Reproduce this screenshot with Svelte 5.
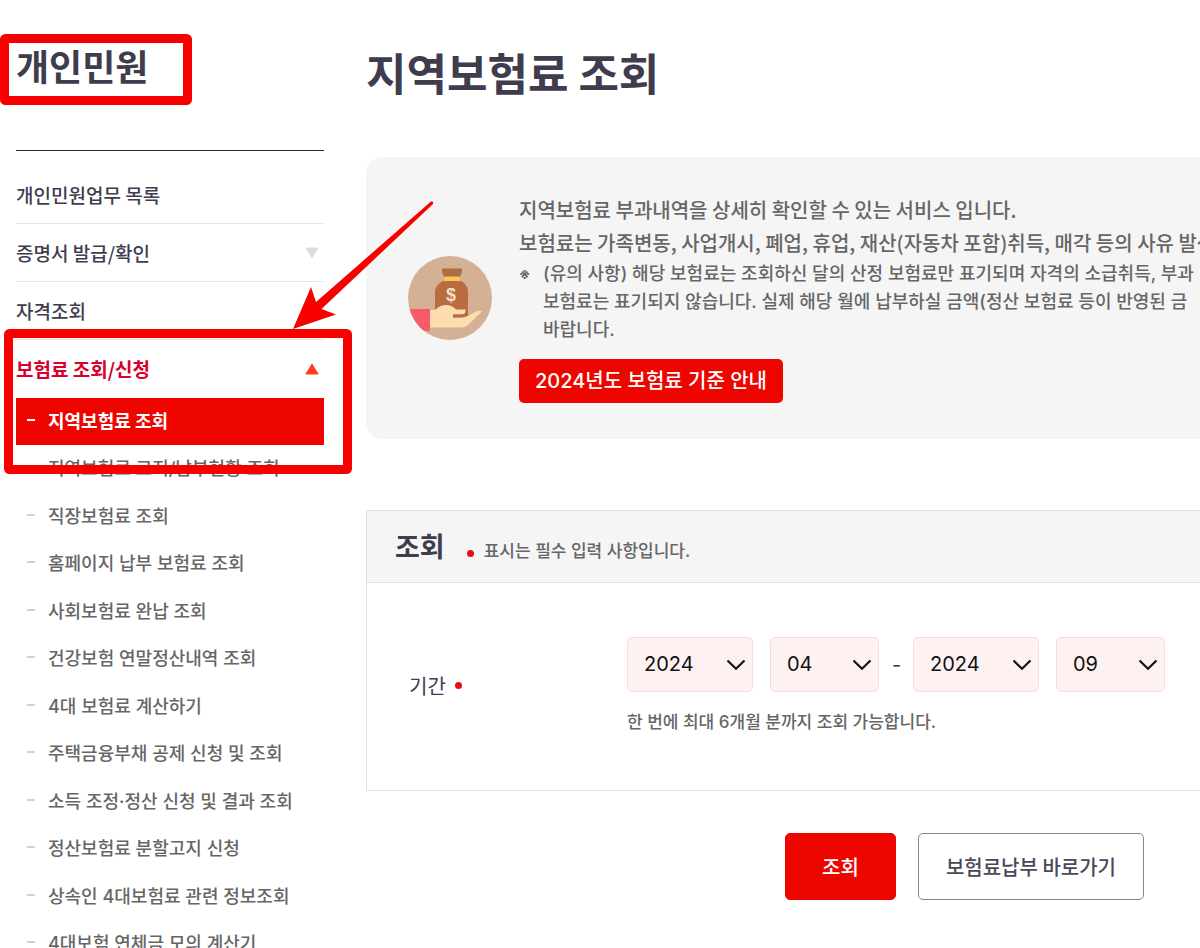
<script>
  const menu = [
    { title: '개인민원업무 목록' },
    { title: '증명서 발급/확인', arrow: true },
    { title: '자격조회', arrow: true },
    { title: '보험료 조회/신청', arrow: true, open: true }
  ]

  const submenu = [
    '지역보험료 조회',
    '지역보험료 고지/납부현황 조회',
    '직장보험료 조회',
    '홈페이지 납부 보험료 조회',
    '사회보험료 완납 조회',
    '건강보험 연말정산내역 조회',
    '4대 보험료 계산하기',
    '주택금융부채 공제 신청 및 조회',
    '소득 조정·정산 신청 및 결과 조회',
    '정산보험료 분할고지 신청',
    '상속인 4대보험료 관련 정보조회',
    '4대보험 연체금 모의 계산기'
  ]

  const years = ['2022', '2023', '2024']
  const months = ['01', '02', '03', '04', '05', '06', '07', '08', '09', '10', '11', '12']

  let current = $state(0)
  let fromYear = $state('2024')
  let fromMonth = $state('04')
  let toYear = $state('2024')
  let toMonth = $state('09')
</script>

{#snippet chevron()}
  <svg class="chevron" viewBox="0 0 20 12" aria-hidden="true">
    <path d="M1.5 1.5 L10 9.8 L18.5 1.5" fill="none" stroke="#111" stroke-width="2.2" />
  </svg>
{/snippet}

<div class="page">
  <aside>
    <h2>개인민원</h2>
    <nav>
      <ul class="menu">
        {#each menu as item}
          <li>
            <a href="#menu" class:open={item.open}>
              {item.title}
              {#if item.arrow}
                <svg viewBox="0 0 14 12" aria-hidden="true">
                  {#if item.open}
                    <path d="M7 1 L13 11 H1 Z" fill="#ff3d1f" stroke="#ff3d1f" stroke-linejoin="round" />
                  {:else}
                    <path d="M1 1 H13 L7 11 Z" fill="#dcdcdc" stroke="#dcdcdc" stroke-linejoin="round" />
                  {/if}
                </svg>
              {/if}
            </a>
          </li>
        {/each}
      </ul>
      <ul class="submenu">
        {#each submenu as title, i}
          <li>
            <a href="#submenu" class:active={i === current} onclick={() => (current = i)}>{title}</a>
          </li>
        {/each}
      </ul>
    </nav>
  </aside>

  <main>
    <h1>지역보험료 조회</h1>

    <section class="info">
      <svg class="money" viewBox="0 0 84 84" aria-hidden="true">
        <defs>
          <clipPath id="circle"><circle cx="42" cy="42" r="42" /></clipPath>
        </defs>
        <g clip-path="url(#circle)">
          <rect width="84" height="84" fill="#d4b095" />
          <path d="M34 12.5 H54 V16 L51.5 21.5 H36.5 L34 16 Z" fill="#ae6c41" />
          <rect x="36" y="20.5" width="16" height="5" rx="2" fill="#ffc75a" />
          <path d="M35 25 H53 C57 27 60 31 60 36 V60 H27 V36 C27 31 31 27 35 25 Z" fill="#b96c3d" />
          <text x="43" y="45" text-anchor="middle">$</text>
          <path
            d="M22 54 H27 C31 50 35 49 38 49 C42 49 46 51 48 53.5 H58 V56 Q57 58.5 53 58.5 H45 V61.5 H55 Q59 61.5 61 59.5 L68 55.5 Q71 54 74 55.5 L60 69 Q57 71.5 53 71.5 H22 Z"
            fill="#fddcae"
          />
          <path d="M45 58.5 H54 Q57.5 58.5 57.5 54 H60 Q60 61.5 54 61.5 H45 Z" fill="#b96c3d" />
          <rect y="53" width="22" height="22" fill="#f75a68" />
        </g>
      </svg>
      <div class="info_text">
        <p>지역보험료 부과내역을 상세히 확인할 수 있는 서비스 입니다.</p>
        <p>보험료는 가족변동, 사업개시, 폐업, 휴업, 재산(자동차 포함)취득, 매각 등의 사유 발생</p>
        <div class="note">
          <span class="mark">※</span>
          <span>
            (유의 사항) 해당 보험료는 조회하신 달의 산정 보험료만 표기되며 자격의 소급취득, 부과<br />
            보험료는 표기되지 않습니다. 실제 해당 월에 납부하실 금액(정산 보험료 등이 반영된 금<br />
            바랍니다.
          </span>
        </div>
        <a class="guide" href="#guide">2024년도 보험료 기준 안내</a>
      </div>
    </section>

    <form>
      <div class="search">
        <div class="search_head">
          <h3>조회</h3>
          <i class="dot"></i>
          <span>표시는 필수 입력 사항입니다.</span>
        </div>
        <div class="search_body">
          <label for="from_year">기간 <i class="dot"></i></label>
          <div>
            <div class="period">
              <span class="select year">
                <select id="from_year" bind:value={fromYear}>
                  {#each years as year}<option>{year}</option>{/each}
                </select>
                {@render chevron()}
              </span>
              <span class="select">
                <select aria-label="시작 월" bind:value={fromMonth}>
                  {#each months as month}<option>{month}</option>{/each}
                </select>
                {@render chevron()}
              </span>
              <span class="dash">-</span>
              <span class="select year">
                <select aria-label="종료 연도" bind:value={toYear}>
                  {#each years as year}<option>{year}</option>{/each}
                </select>
                {@render chevron()}
              </span>
              <span class="select">
                <select aria-label="종료 월" bind:value={toMonth}>
                  {#each months as month}<option>{month}</option>{/each}
                </select>
                {@render chevron()}
              </span>
            </div>
            <p class="hint">한 번에 최대 6개월 분까지 조회 가능합니다.</p>
          </div>
        </div>
      </div>
      <div class="buttons">
        <button type="button" class="primary">조회</button>
        <button type="button">보험료납부 바로가기</button>
      </div>
    </form>
  </main>

  <!-- guide marks: two frames and the arrow -->
  <svg class="marks" width="440" height="480" aria-hidden="true">
    <g fill="none" stroke="#f80000" stroke-width="9" stroke-linejoin="round">
      <rect x="4.5" y="38.5" width="183" height="62" rx="1" />
      <rect x="8.5" y="333.5" width="339" height="136" rx="1" />
    </g>
    <path d="M293 329 L311 287 L316 302 L431 201.5 Q434 201 433 204 L321.5 309 L336 314.5 Z" fill="#f80000" />
  </svg>
</div>

<style>
  :global(body) {
    margin: 0;
    background: #fff;
  }

  .page {
    position: relative;
    display: flex;
    gap: 42px;
    padding-left: 16px;
    overflow: hidden;
    font-family: 'Noto Sans CJK KR', sans-serif;
    color: #3f3d4d;
  }

  h1, h2, h3, p, ul {
    margin: 0;
    padding: 0;
  }
  ul {
    list-style: none;
  }
  a {
    text-decoration: none;
  }

  aside {
    flex: 0 0 308px;
    padding-top: 38px;
  }
  h2 {
    font-size: 36px;
    line-height: 54px;
    padding-bottom: 58px;
    border-bottom: 1px solid #2b2b33;
  }

  .menu {
    padding-top: 15px;
  }
  .menu a {
    display: flex;
    align-items: center;
    justify-content: space-between;
    height: 57px;
    padding-right: 5px;
    border-bottom: 1px solid #e6e6e6;
    font-size: 19px;
    font-weight: 500;
    color: #3f3d4d;
  }
  .menu a.open {
    border-color: transparent;
    font-weight: 700;
    color: #d8002c;
  }
  .menu svg {
    width: 14px;
    height: 12px;
  }

  .submenu a {
    display: flex;
    align-items: center;
    box-sizing: border-box;
    height: 47px;
    padding-bottom: 3px;
    font-family: Inter, 'Noto Sans CJK KR', sans-serif;
    font-size: 18px;
    font-weight: 500;
    color: #666;
  }
  .submenu li:nth-child(even) {
    padding-bottom: 1px;
  }
  .submenu a::before {
    content: '';
    width: 8px;
    height: 2px;
    margin: 0 13px 0 11px;
    background: #d2d2d2;
  }
  .submenu a.active {
    background: #ee0500;
    color: #fff;
    font-weight: 700;
  }
  .submenu a.active::before {
    background: #fff;
  }

  main {
    flex: 1;
    min-width: 0;
    padding-top: 39px;
  }
  h1 {
    font-size: 44px;
    line-height: 66px;
  }

  .info {
    display: flex;
    align-items: center;
    margin-top: 52px;
    padding: 36px 0 36px 42px;
    gap: 27px;
    border-radius: 16px 0 0 16px;
    background: #f5f5f5;
    color: #666;
    font-weight: 500;
    overflow: hidden;
    white-space: nowrap;
  }
  .money {
    flex: 0 0 84px;
    height: 84px;
  }
  .money text {
    font-family: 'Liberation Sans', sans-serif;
    font-size: 18px;
    font-weight: 700;
    fill: #f6dcc8;
  }
  .info_text p {
    font-size: 20px;
    line-height: 33px;
  }
  .note {
    display: flex;
    padding-top: 1px;
    font-family: Inter, 'Noto Sans CJK KR', sans-serif;
    font-size: 18px;
    line-height: 28px;
  }
  .note .mark {
    flex: 0 0 24px;
    font-size: 14px;
    font-weight: 700;
  }
  .guide {
    display: inline-block;
    margin-top: 15px;
    padding: 0 16px;
    border-radius: 5px;
    background: #ee0500;
    color: #fff;
    font-family: Inter, 'Noto Sans CJK KR', sans-serif;
    font-size: 20px;
    font-weight: 500;
    line-height: 44px;
  }

  .search {
    margin-top: 71px;
    border: 1px solid #e2e2e2;
    border-right: 0;
  }
  .search_head {
    display: flex;
    align-items: baseline;
    padding-left: 28px;
    border-bottom: 1px solid #e2e2e2;
    background: #f5f5f5;
    color: #666;
    font-family: Inter, 'Noto Sans CJK KR', sans-serif;
    font-size: 17px;
    font-weight: 500;
  }
  h3 {
    margin-right: 22px;
    padding-bottom: 1px;
    color: #3f3d4d;
    font-family: 'Noto Sans CJK KR', sans-serif;
    font-size: 27px;
    line-height: 70px;
  }
  .dot {
    display: inline-block;
    width: 7px;
    height: 7px;
    border-radius: 50%;
    background: #e60f0f;
  }
  .search_head .dot {
    margin-right: 10px;
  }

  .search_body {
    display: flex;
    align-items: center;
    padding: 54px 0 54px 42px;
  }
  label {
    display: flex;
    align-items: center;
    gap: 9px;
    flex: 0 0 218px;
    padding-bottom: 2px;
    font-size: 20px;
  }
  .period {
    display: flex;
    align-items: center;
    gap: 17px;
  }
  .select {
    position: relative;
    width: 109px;
  }
  .select.year {
    width: 126px;
  }
  select {
    display: block;
    width: 100%;
    height: 55px;
    padding: 0 16px 2px;
    appearance: none;
    border: 1px solid #fadadd;
    border-radius: 5px;
    background: #fef1f1;
    color: #111;
    font-family: Inter, sans-serif;
    font-size: 20px;
  }
  .chevron {
    position: absolute;
    right: 7px;
    top: 22px;
    width: 20px;
    height: 12px;
    pointer-events: none;
  }
  .dash {
    width: 8px;
    margin: 0 -4px;
    font-family: Inter, sans-serif;
    font-size: 20px;
    text-align: center;
  }
  .hint {
    margin-top: 17px;
    color: #666;
    font-family: Inter, 'Noto Sans CJK KR', sans-serif;
    font-size: 17px;
    font-weight: 500;
    line-height: 27px;
  }

  .buttons {
    display: flex;
    justify-content: flex-end;
    gap: 22px;
    padding: 42px 56px 42px 0;
  }
  button {
    height: 67px;
    padding: 0 27px;
    border: 1px solid #85858c;
    border-radius: 5px;
    background: #fff;
    color: #4b4959;
    font-family: inherit;
    font-size: 20px;
    font-weight: 500;
  }
  button.primary {
    padding: 0 36px;
    border-color: #ee0500;
    background: #ee0500;
    color: #fff;
  }

  .marks {
    position: absolute;
    left: 0;
    top: 0;
    pointer-events: none;
  }
</style>
